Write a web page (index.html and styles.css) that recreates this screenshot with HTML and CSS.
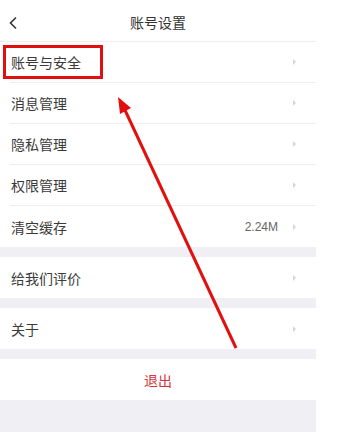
FILE: index.html
```html
<!DOCTYPE html>
<html lang="zh">
<head>
<meta charset="utf-8">
<link rel="stylesheet" href="styles.css">
</head>
<body>
<div class="app">
  <header class="nav">
    <svg class="back" width="10" height="14" viewBox="0 0 10 14"><path d="M8 1.5 L2.5 7 L8 12.5" fill="none" stroke="#333" stroke-width="1.6"/></svg>
    <span class="title">账号设置</span>
  </header>
  <section class="group">
    <div class="row"><span class="label">账号与安全</span><span class="arrow"></span></div>
    <div class="row"><span class="label">消息管理</span><span class="arrow"></span></div>
    <div class="row"><span class="label">隐私管理</span><span class="arrow"></span></div>
    <div class="row"><span class="label">权限管理</span><span class="arrow"></span></div>
    <div class="row"><span class="label">清空缓存</span><span class="value">2.24M</span><span class="arrow"></span></div>
  </section>
  <section class="group">
    <div class="row"><span class="label">给我们评价</span><span class="arrow"></span></div>
  </section>
  <section class="group">
    <div class="row"><span class="label">关于</span><span class="arrow"></span></div>
  </section>
  <section class="group">
    <div class="logout">退出</div>
  </section>
</div>
<svg class="annot" width="339" height="432" viewBox="0 0 339 432">
  <rect x="4.5" y="46.5" width="97" height="31" fill="none" stroke="#e01010" stroke-width="3"/>
  <line x1="236" y1="348" x2="124" y2="108" stroke="#e01010" stroke-width="3"/>
  <polygon points="118,97 131,108 120,114" fill="#e01010"/>
</svg>
</body>
</html>
```
FILE: styles.css
```css
html, body { margin: 0; padding: 0; background: #fff; }
body { width: 339px; height: 432px; overflow: hidden; position: relative;
  font-family: "Noto Sans CJK SC", "Noto Sans", sans-serif; }
.app { width: 316px; height: 432px; background: #efeff4; display: flex; flex-direction: column; gap: 10px; }
.nav { height: 41px; background: #fff; border-bottom: 1px solid #eee; display: flex; align-items: center; justify-content: center; position: relative; margin-bottom: -10px; }
.back { position: absolute; left: 8px; top: 16px; }
.title { font-size: 14px; color: #333; padding-top: 2px; }
.group { background: #fff; }
.row { height: 40px; margin-left: 10px; border-bottom: 1px solid #eee; display: flex; align-items: center; padding-right: 20px; }
.row:last-child { height: 41px; border-bottom: none; }
.label { flex: 1; font-size: 14px; color: #3a3a3a; padding-left: 1px; }
.value { font-size: 12px; color: #666; margin-right: 15px; font-family: "Liberation Sans", sans-serif; }
.arrow { width: 0; height: 0; border-left: 3px solid #d6d6d6; border-top: 3px solid transparent; border-bottom: 3px solid transparent; }
.logout { height: 41px; display: flex; align-items: center; justify-content: center; font-size: 14px; color: #d8343c; }
.annot { position: absolute; left: 0; top: 0; pointer-events: none; }
```
